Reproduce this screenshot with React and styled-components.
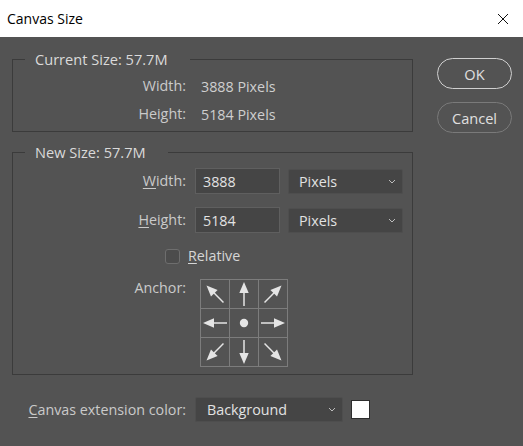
import React from "react";
import styled, { createGlobalStyle } from "styled-components";

const GlobalStyle = createGlobalStyle`
  html, body {
    margin: 0;
    padding: 0;
    background: #535353;
  }
  body {
    font-family: "Open Sans", "Noto Sans", sans-serif;
    font-size: 14.3px;
    color: #d2d2d2;
  }
`;

const Window = styled.div`
  width: 523px;
  height: 446px;
  display: flex;
  flex-direction: column;
  background: #535353;
  overflow: hidden;
`;

const TitleBar = styled.div`
  height: 37px;
  flex: none;
  background: #ffffff;
  display: flex;
  align-items: center;
  justify-content: space-between;
  padding: 0 14px 0 7px;
  color: #000;
  font-size: 14px;
`;

const Body = styled.div`
  display: flex;
  padding: 13px 0 0 12px;
`;

const LeftColumn = styled.div`
  width: 401px;
  display: flex;
  flex-direction: column;
`;

const RightColumn = styled.div`
  margin: 8px 0 0 24px;
  display: flex;
  flex-direction: column;
  gap: 13px;
`;

const Group = styled.fieldset`
  margin: ${(p) => (p.$first ? "0" : "11px 0 0")};
  padding: 0;
  border: 1px solid #3b3b3b;
  min-width: 0;
`;

const Legend = styled.legend`
  margin-left: 12px;
  padding: 0 22px 0 10px;
  line-height: 18px;
  font-size: 14.6px;
  color: #dadada;
`;

const Rows = styled.div`
  display: grid;
  grid-template-columns: 173px 1fr;
  column-gap: 9px;
  row-gap: ${(p) => p.$gap || 0}px;
  grid-template-rows: ${(p) => p.$rows};
  padding: ${(p) => p.$pad};
  align-items: center;
`;

const Label = styled.div`
  text-align: right;
  color: #cacaca;
  align-self: ${(p) => (p.$top ? "start" : "center")};
  line-height: 18px;
  white-space: nowrap;
`;

const Value = styled.div`
  padding-left: 6px;
  color: #cfcfcf;
`;

const Key = styled.span`
  text-decoration: underline;
  text-underline-offset: 2px;
`;

const Fields = styled.div`
  display: flex;
  gap: 8px;
  align-items: center;
`;

const NumberInput = styled.input`
  box-sizing: border-box;
  width: 85px;
  height: 26px;
  background: #454545;
  border: 1px solid #5f5f5f;
  color: #e2e2e2;
  font: inherit;
  padding: 0 7px;
  outline: none;
`;

const Dropdown = styled.div`
  box-sizing: border-box;
  width: ${(p) => p.$w}px;
  height: 25px;
  background: #454545;
  border: 1px solid #4e4e4e;
  border-radius: 2px;
  color: #e2e2e2;
  display: flex;
  align-items: center;
  justify-content: space-between;
  padding: 0 6px 0 ${(p) => p.$padLeft || 10}px;
`;

const CheckRow = styled.div`
  grid-column: 1 / -1;
  padding-left: 152px;
  display: flex;
  align-items: center;
  gap: 8px;
  color: #d6d6d6;
  line-height: 18px;
`;

const CheckBox = styled.span`
  box-sizing: border-box;
  width: 15px;
  height: 15px;
  border: 1px solid #6e6e6e;
  border-radius: 3px;
  background: #4c4c4c;
`;

const AnchorGrid = styled.div`
  margin-left: 5px;
  display: grid;
  grid-template-columns: repeat(3, 28px);
  grid-template-rows: repeat(3, 28px);
  gap: 1px;
  padding: 1px;
  width: max-content;
  background: #7c7c7c;
`;

const AnchorCell = styled.div`
  background: #535353;
  display: flex;
  align-items: center;
  justify-content: center;
`;

const DialogButton = styled.button`
  box-sizing: border-box;
  width: 75px;
  height: 31px;
  border-radius: 16px;
  background: transparent;
  border: 1.5px solid ${(p) => (p.$primary ? "#d0d0d0" : "#7a7a7a")};
  color: #e0e0e0;
  font: inherit;
  font-size: 14.6px;
  line-height: 18px;
  padding: 0;
`;

const BottomRow = styled.div`
  margin: 22px 0 0 1px;
  display: grid;
  grid-template-columns: 173px auto auto;
  column-gap: 9px;
  align-items: center;
  justify-content: start;
`;

const Swatch = styled.span`
  width: 19px;
  height: 19px;
  box-sizing: border-box;
  background: #ffffff;
  border: 1px solid #2e2e2e;
  margin-left: -1px;
`;

const Chevron = () => (
  <svg width="8" height="5" viewBox="0 0 8 5">
    <path d="M1 1 L4 4 L7 1" fill="none" stroke="#bdbdbd" strokeWidth="1" />
  </svg>
);

const CloseIcon = () => (
  <svg width="12" height="12" viewBox="0 0 12 12">
    <path d="M1 1 L11 11 M11 1 L1 11" stroke="#111" strokeWidth="1" />
  </svg>
);

// arrow drawn pointing up, rotated per cell
const Arrow = ({ angle }) => (
  <svg width="28" height="28" viewBox="0 0 28 28">
    <g transform={`rotate(${angle} 14 14)`}>
      <line x1="14" y1="12" x2="14" y2="26" stroke="#e4e4e4" strokeWidth="1.5" />
      <polygon points="14,2 9.3,13 18.7,13" fill="#e4e4e4" />
    </g>
  </svg>
);

const Dot = () => (
  <svg width="28" height="28" viewBox="0 0 28 28">
    <circle cx="14" cy="14" r="4.2" fill="#e4e4e4" />
  </svg>
);

const anchors = [-45, 0, 45, -90, null, 90, -135, 180, 135];

const App = () => {
  return (
    <Window>
      <GlobalStyle />
      <TitleBar>
        <span>Canvas Size</span>
        <CloseIcon />
      </TitleBar>
      <Body>
        <LeftColumn>
          <Group $first>
            <Legend>Current Size: 57.7M</Legend>
            <Rows $rows="28px 28px" $pad="4px 0 3px">
              <Label>Width:</Label>
              <Value>3888 Pixels</Value>
              <Label>Height:</Label>
              <Value>5184 Pixels</Value>
            </Rows>
          </Group>

          <Group>
            <Legend>New Size: 57.7M</Legend>
            <Rows $gap={13} $rows="26px 26px 20px 88px" $pad="7px 0 7px">
              <Label>
                <Key>W</Key>idth:
              </Label>
              <Fields>
                <NumberInput defaultValue="3888" />
                <Dropdown $w={115}>
                  Pixels
                  <Chevron />
                </Dropdown>
              </Fields>
              <Label>
                <Key>H</Key>eight:
              </Label>
              <Fields>
                <NumberInput defaultValue="5184" />
                <Dropdown $w={115}>
                  Pixels
                  <Chevron />
                </Dropdown>
              </Fields>
              <CheckRow>
                <CheckBox />
                <span>
                  <Key>R</Key>elative
                </span>
              </CheckRow>
              <Label $top>Anchor:</Label>
              <AnchorGrid>
                {anchors.map((a, i) => (
                  <AnchorCell key={i}>
                    {a === null ? <Dot /> : <Arrow angle={a} />}
                  </AnchorCell>
                ))}
              </AnchorGrid>
            </Rows>
          </Group>

          <BottomRow>
            <Label>
              <Key>C</Key>anvas extension color:
            </Label>
            <Dropdown $w={148} $padLeft={11}>
              Background
              <Chevron />
            </Dropdown>
            <Swatch />
          </BottomRow>
        </LeftColumn>

        <RightColumn>
          <DialogButton $primary>OK</DialogButton>
          <DialogButton>Cancel</DialogButton>
        </RightColumn>
      </Body>
    </Window>
  );
};

export default App;
